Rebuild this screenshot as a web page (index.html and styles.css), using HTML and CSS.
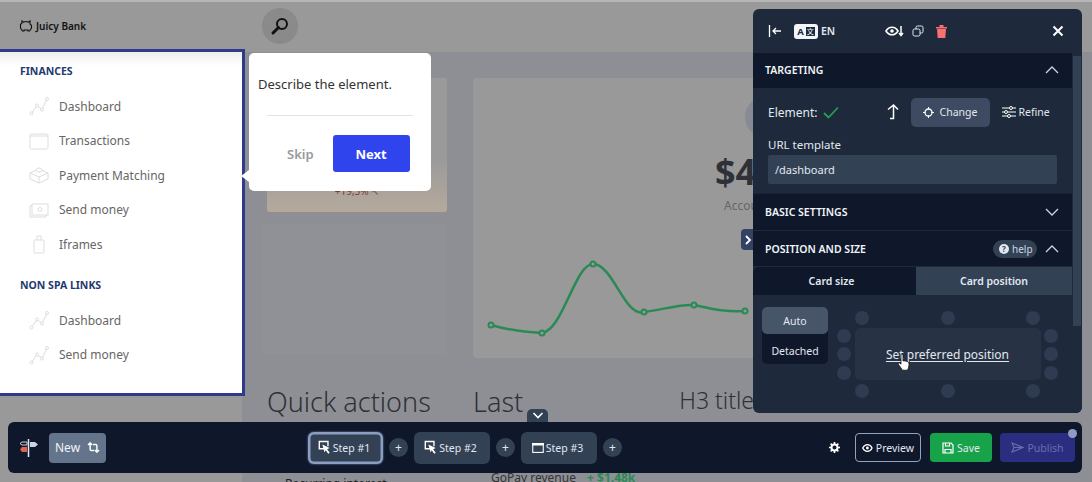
FILE: index.html
```html
<!DOCTYPE html>
<html lang="en">
<head>
<meta charset="utf-8">
<title>Juicy Bank</title>
<link rel="stylesheet" href="styles.css">
</head>
<body>
<div class="stage">
  <header class="topbar">
    <div class="logo">
      <svg width="14" height="14" viewBox="0 0 14 14" class="logo-icon"><path d="M3 2l1.500 1.200C6 2.400 8 2.400 9.500 3.200L11 2v3l1.500 1.500V9L10.500 12H9V11H5v1H3.500L1.500 9V5.500L3 4z" fill="none" stroke="#111" stroke-width="1.100"/></svg>
      <span>Juicy Bank</span>
    </div>
    <div class="search">
      <svg width="20" height="20" viewBox="0 0 20 20"><circle cx="12" cy="8" r="5" fill="none" stroke="#111" stroke-width="2"/><path d="M8.500 11.500L3 17" stroke="#111" stroke-width="3" stroke-linecap="round"/></svg>
    </div>
  </header>

  <div class="main">
    <nav class="sidebar">
      <h4 class="nav-title">FINANCES</h4>
      <a class="nav-item"><svg class="nav-icon" viewBox="0 0 20 20"><use href="#graph"/></svg>Dashboard</a>
      <a class="nav-item"><svg class="nav-icon" viewBox="0 0 20 20"><rect x="1" y="3" width="18" height="15" rx="1.500" fill="none" stroke="#ddd"/><path d="M1 5h18" stroke="#ddd"/></svg>Transactions</a>
      <a class="nav-item"><svg class="nav-icon" viewBox="0 0 20 20"><path d="M1 8l9-4 9 4v6l-9 4-9-4zM1 8l9 4 9-4M10 12v6" fill="none" stroke="#ddd"/><ellipse cx="10" cy="5" rx="3" ry="2" fill="#fff" stroke="#ddd"/></svg>Payment Matching</a>
      <a class="nav-item"><svg class="nav-icon" viewBox="0 0 20 20"><rect x="3" y="4" width="16" height="11" fill="none" stroke="#ddd"/><path d="M3 6H1v11h16v-2" fill="none" stroke="#ddd"/><circle cx="11" cy="9.500" r="2" fill="none" stroke="#ddd"/></svg>Send money</a>
      <a class="nav-item"><svg class="nav-icon" viewBox="0 0 20 20"><rect x="5" y="6" width="10" height="13" rx="1" fill="none" stroke="#ddd"/><path d="M8 6V2h4v4" fill="none" stroke="#ddd"/></svg>Iframes</a>
      <h4 class="nav-title nav-title-second">NON SPA LINKS</h4>
      <a class="nav-item"><svg class="nav-icon" viewBox="0 0 20 20"><use href="#graph"/></svg>Dashboard</a>
      <a class="nav-item"><svg class="nav-icon" viewBox="0 0 20 20"><use href="#graph"/></svg>Send money</a>
    </nav>

    <section class="content">
      <div class="col-left">
        <div class="peach-card"><span class="peach-text">+19,5% ↖</span></div>
        <div class="ghost-card"></div>
        <h2 class="big-heading">Quick actions</h2>
        <p class="recent">Recurring interest</p>
      </div>
      <div class="col-mid">
        <div class="chart-card">
          <div class="avatar"></div>
          <div class="amount">$4</div>
          <div class="account">Account</div>
          <svg class="spark" width="287" height="280" viewBox="0 0 287 280">
            <path d="M18 247C35 252 50 254 69 255C90 252 102 186 120 186C140 186 152 240 171 234C190 232 205 226 221 227C240 231 250 234 272 233" fill="none" stroke="#2a8a55" stroke-width="2.500"/>
            <g fill="#999" stroke="#2a8a55" stroke-width="2"><circle cx="18" cy="247" r="2.500"/><circle cx="69" cy="255" r="2.500"/><circle cx="120" cy="186" r="2.500"/><circle cx="171" cy="234" r="2.500"/><circle cx="221" cy="227" r="2.500"/><circle cx="272" cy="233" r="2.500"/></g>
          </svg>
        </div>
        <div class="heading-row">
          <h2 class="big-heading">Last</h2>
          <h3 class="h3-title">H3 title</h3>
        </div>
        <p class="revenue">GoPay revenue <b>+ $1.48k</b></p>
      </div>
    </section>
  </div>

  <aside class="popover">
    <span class="popover-arrow"></span>
    <p class="popover-text">Describe the element.</p>
    <hr class="popover-rule">
    <div class="popover-actions">
      <span class="skip">Skip</span>
      <button class="next">Next</button>
    </div>
  </aside>

  <span class="side-toggle"><svg width="8" height="12" viewBox="0 0 8 12"><path d="M2 2l4 4-4 4" fill="none" stroke="#fff" stroke-width="1.800"/></svg></span>

  <aside class="panel">
    <div class="panel-head">
      <svg class="ph-back" width="14" height="14" viewBox="0 0 14 14"><path d="M1.500 1v12M13 7H5M8 4L5 7l3 3" fill="none" stroke="#fff" stroke-width="1.300"/></svg>
      <span class="lang-badge"><b>A</b><i>文</i></span>
      <span class="lang">EN</span>
      <svg class="ph-eye" width="19" height="12" viewBox="0 0 19 12"><path d="M1 6c3-5 9-5 12 0-3 5-9 5-12 0z" fill="none" stroke="#fff" stroke-width="1.600"/><circle cx="7" cy="6" r="1.800" fill="#fff"/><path d="M16 1v9M14 8l2 2.500L18 8" fill="none" stroke="#fff" stroke-width="1.500"/></svg>
      <svg class="ph-copy" width="12" height="12" viewBox="0 0 12 12"><rect x="4" y="1" width="7" height="7" rx="1.500" fill="none" stroke="#e2e8f0"/><rect x="1" y="4" width="7" height="7" rx="1.500" fill="#1e293b" stroke="#e2e8f0"/></svg>
      <svg class="ph-trash" width="11" height="13" viewBox="0 0 11 13"><path d="M0 2h11v1.500H0zM3.500 0h4v2h-4zM1 4h9l-.7 9H1.700z" fill="#f87171"/></svg>
      <svg class="ph-close" width="12" height="12" viewBox="0 0 12 12"><path d="M1.500 1.500l9 9M10.500 1.500l-9 9" stroke="#fff" stroke-width="2"/></svg>
    </div>
    <div class="panel-body">
      <div class="panel-scroll">
        <div class="section-head section-target">
          <span>TARGETING</span>
          <svg class="chev" width="14" height="8" viewBox="0 0 14 8"><path d="M1 7l6-6 6 6" fill="none" stroke="#cbd5e1" stroke-width="1.300"/></svg>
        </div>
        <div class="targeting">
          <div class="element-row">
            <span class="element-label">Element:</span>
            <svg class="check" width="16" height="13" viewBox="0 0 16 13"><path d="M1 7l4.500 4.500L15 1.500" fill="none" stroke="#22a04f" stroke-width="1.800"/></svg>
            <svg class="up" width="12" height="16" viewBox="0 0 12 16"><path d="M1 5.500L6.500 1 11 5.500M6.500 1v13.500H3" fill="none" stroke="#fff" stroke-width="1.500"/></svg>
            <button class="change"><svg width="11" height="11" viewBox="0 0 11 11"><circle cx="5.500" cy="5.500" r="3.500" fill="none" stroke="#fff" stroke-width="1.300"/><path d="M5.500 0v2.500M5.500 8.500V11M0 5.500h2.500M8.500 5.500H11" stroke="#fff"/></svg>Change</button>
            <span class="refine"><svg width="14" height="12" viewBox="0 0 14 12"><path d="M0 2h14M0 6h14M0 10h14" stroke="#fff"/><circle cx="9" cy="2" r="1.500" fill="#1e293b" stroke="#fff"/><circle cx="4" cy="6" r="1.500" fill="#1e293b" stroke="#fff"/><circle cx="7" cy="10" r="1.500" fill="#1e293b" stroke="#fff"/></svg>Refine</span>
          </div>
          <label class="field-label">URL template</label>
          <div class="field">/dashboard</div>
        </div>
        <div class="section-head section-basic">
          <span>BASIC SETTINGS</span>
          <svg class="chev" width="14" height="8" viewBox="0 0 14 8"><path d="M1 1l6 6 6-6" fill="none" stroke="#cbd5e1" stroke-width="1.300"/></svg>
        </div>
        <div class="section-head section-pos">
          <span>POSITION AND SIZE</span>
          <span class="help"><i>?</i>help</span>
          <svg class="chev" width="14" height="8" viewBox="0 0 14 8"><path d="M1 7l6-6 6 6" fill="none" stroke="#cbd5e1" stroke-width="1.300"/></svg>
        </div>
        <div class="tabs">
          <span class="tab tab-size">Card size</span>
          <span class="tab tab-active">Card position</span>
        </div>
        <div class="position">
          <div class="modes">
            <span class="mode mode-active">Auto</span>
            <span class="mode">Detached</span>
          </div>
          <div class="pos-grid">
            <div class="dots dots-x"><i></i><i></i><i></i></div>
            <div class="pos-mid">
              <div class="dots dots-y"><i></i><i></i><i></i></div>
              <div class="pos-box"><a class="pos-link">Set preferred position</a></div>
              <div class="dots dots-y"><i></i><i></i><i></i></div>
            </div>
            <div class="dots dots-x"><i></i><i></i><i></i></div>
            <svg class="cursor" width="14" height="19" viewBox="0 0 14 19"><path d="M4 1.500c1-.8 2 0 2 1V8l1-.3 1 .3 1 .2 1.500.5c1 .4 1.500 1 1.500 2.500 0 2-.5 4-1.500 6H5.500L1.500 11.500c-.8-1 .3-2 1.500-1.200l1 .9z" fill="#fff" stroke="#111" stroke-width=".8"/></svg>
          </div>
        </div>
      </div>
      <div class="scrollbar"><span class="thumb"></span></div>
    </div>
  </aside>

  <span class="bar-toggle"><svg width="12" height="7" viewBox="0 0 12 7"><path d="M1.500 1l4.500 4.500L10.500 1" fill="none" stroke="#fff" stroke-width="1.600"/></svg></span>

  <footer class="bar">
    <div class="bar-left">
      <svg width="19" height="18" viewBox="0 0 19 18"><path d="M9.500 0v18" stroke="#e2e8f0" stroke-width="1.500"/><path d="M11 3h5l3 2.500L16 8h-5z" fill="#cbd5e1"/><path d="M8 3H3L1 4.500 3 6h5z" fill="none" stroke="#cbd5e1"/><path d="M8 8H3l-2 2.500L3 13h5z" fill="#e2624f"/></svg>
      <button class="new-btn">New
        <svg width="13" height="11" viewBox="0 0 15 13"><path d="M1 3.500L3.500 1 6 3.500M3.500 1.500V8.500q0 1.500 1.500 1.500H8M14 9.500L11.500 12 9 9.500M11.500 11.500V4.500q0-1.500-1.500-1.500H7" fill="none" stroke="#fff" stroke-width="1.700"/></svg>
      </button>
    </div>
    <div class="steps">
      <button class="step step-active"><svg class="step-icon" width="13" height="15" viewBox="0 0 15 17"><use href="#click"/></svg>Step #1</button>
      <span class="add">+</span>
      <button class="step"><svg class="step-icon" width="13" height="15" viewBox="0 0 15 17"><use href="#click"/></svg>Step #2</button>
      <span class="add">+</span>
      <button class="step"><svg class="step-icon" width="12" height="10" viewBox="0 0 14 12"><rect x=".7" y=".7" width="12.600" height="10.600" fill="none" stroke="#fff" stroke-width="1.300"/><path d="M0 0h14v3H0z" fill="#fff"/></svg>Step #3</button>
      <span class="add">+</span>
    </div>
    <div class="bar-right">
      <svg class="gear" width="11" height="11" viewBox="0 0 12 12"><circle cx="6" cy="6" r="3.300" fill="none" stroke="#fff" stroke-width="2.200"/><path d="M6 0v3M6 9v3M0 6h3M9 6h3M1.800 1.800l2 2M8.200 8.200l2 2M10.200 1.800l-2 2M3.800 8.200l-2 2" stroke="#fff" stroke-width="1.800"/></svg>
      <button class="act act-preview"><svg width="12" height="10" viewBox="0 0 12 10"><path d="M.8 5c2.500-5 8-5 10.400 0-2.400 5-7.900 5-10.400 0z" fill="none" stroke="#fff" stroke-width="1.400"/><circle cx="6" cy="5" r="1.600" fill="#fff"/></svg>Preview</button>
      <button class="act act-save"><svg width="12" height="12" viewBox="0 0 12 12"><path d="M1 1h8l2 2v8H1zM3.500 1v3h4V1M3 11V7.500h6V11" fill="none" stroke="#fff" stroke-width="1.200"/></svg>Save</button>
      <button class="act act-publish"><svg width="13" height="11" viewBox="0 0 13 11"><path d="M1 1l11 4.500L1 10l2-4.500zM3 5.500h9" fill="none" stroke="#6b6fa8" stroke-width="1.100"/></svg>Publish<span class="pub-dot"></span></button>
    </div>
  </footer>

  <svg class="defs" width="0" height="0">
    <defs>
      <g id="graph" fill="none" stroke="#ddd"><path d="M2.500 17.500L8 9.500l5 4L18 3"/><circle cx="2.500" cy="17.500" r="1.500" fill="#fff"/><circle cx="8" cy="9.500" r="1.500" fill="#fff"/><circle cx="13" cy="13.500" r="1.500" fill="#fff"/><circle cx="18" cy="3" r="1.500" fill="#fff"/></g>
      <g id="click"><path d="M10 10H1.500V1.500h10V7" fill="none" stroke="#fff" stroke-width="1.600"/><path d="M5 5l8.500 4-3 1.500 3 4-1.800 1.300-2.700-4L7.500 14z" fill="#fff"/></g>
    </defs>
  </svg>
</div>
</body>
</html>
```
FILE: styles.css
```css
* { box-sizing: border-box; }
html, body { margin: 0; padding: 0; }
body { font-family: "Noto Sans", "Open Sans", sans-serif; background: #8e8f94; }
button { font-family: inherit; border: 0; cursor: pointer; }
h2, h3, h4, p { margin: 0; font-weight: 400; }

.stage { position: relative; width: 1092px; height: 482px; overflow: hidden; background: #999; }
.defs { position: absolute; }

/* page behind the overlay */
.topbar { height: 52px; background: #999; border-top: 2px solid #b5b5b5; display: flex; align-items: center; padding-left: 19px; }
.logo { display: flex; align-items: center; gap: 3px; width: 243px; font: 600 10px "Noto Sans", sans-serif; color: #111; margin-top: -2px; }
.search { width: 36px; height: 36px; border-radius: 50%; background: #8a8a8a; display: flex; align-items: center; justify-content: center; margin-top: -2px; }

.main { display: flex; height: 430px; }
.sidebar { position: relative; z-index: 2; flex: none; width: 245px; height: 347px; margin-top: -3px; background: linear-gradient(#eeeeee, #fff 14px); border: 3px solid #2e3a8c; border-left: 0; padding: 11px 0 0 20px; }
.nav-title { font-size: 10.500px; font-weight: 700; color: #1e3a70; height: 16px; line-height: 16px; margin-bottom: 10px; }
.nav-title-second { margin: 15px 0 10.500px; }
.nav-item { display: flex; align-items: center; gap: 10px; height: 34.500px; padding-left: 9px; font-size: 12px; color: #666; }
.nav-icon { width: 20px; height: 20px; flex: none; }

.content { flex: 1; display: flex; gap: 26px; background: #8e8f94; padding: 26px 0 0 25px; margin-left: -3px; }
.col-left { width: 180px; flex: none; }
.col-mid { width: 400px; flex: none; }
.peach-card { height: 134px; background: linear-gradient(#9a9a9a 60%, #b5a99c); border-radius: 3px; display: flex; align-items: flex-end; justify-content: center; padding-bottom: 14px; }
.peach-text { font-size: 10px; color: #7a3b2a; }
.ghost-card { height: 130px; margin: 12px 0 30px -5px; background: #909196; border-radius: 3px; }
.big-heading { font-size: 27px; font-weight: 300; line-height: 36px; color: #2e3138; }
.recent { margin-top: 57px; padding-left: 18px; font-size: 12px; color: #222; line-height: 14px; }

.chart-card { position: relative; width: 400px; height: 280px; background: #999; border-radius: 3px; margin-bottom: 26px; }
.avatar { position: absolute; left: 272px; top: 18px; width: 42px; height: 42px; border-radius: 50%; background: #868b94; }
.amount { position: absolute; left: 242px; top: 70px; font-size: 36px; line-height: 48px; font-weight: 700; color: #2e3138; }
.account { position: absolute; left: 251px; top: 119px; font-size: 12px; color: #666; }
.spark { position: absolute; left: 0; top: 0; }
.heading-row { display: flex; gap: 204px; height: 36px; width: 280px; white-space: nowrap; }
.h3-title { font-size: 23px; font-weight: 300; line-height: 32px; color: #2e3138; margin-left: -48px; }
.revenue { margin-top: 51px; padding-left: 18px; font-size: 12px; color: #333; line-height: 14px; }
.revenue b { margin-left: 8px; color: #2a8a55; font-weight: 700; }

/* tour popover */
.popover { position: absolute; z-index: 3; left: 249px; top: 53px; width: 182px; height: 138px; background: #fff; border-radius: 5px; padding: 22px 0 0 9px; }
.popover-arrow { position: absolute; left: -8px; top: 117px; width: 0; height: 0; border: 6px solid transparent; border-right: 8px solid #fff; border-left: 0; }
.popover-text { font-size: 13px; line-height: 18px; color: #333; }
.popover-rule { border: 0; border-top: 1px solid #e2e2e2; margin: 22px 0 0 9px; width: 146px; }
.popover-actions { display: flex; align-items: center; margin-top: 19px; padding-left: 29px; gap: 19px; }
.skip { font-size: 13px; font-weight: 600; color: #999; }
.next { width: 77px; height: 37px; border-radius: 3px; background: #3044ee; color: #fff; font-size: 13px; font-weight: 700; }

.side-toggle { position: absolute; z-index: 3; left: 741px; top: 229px; width: 14px; height: 21px; background: #334163; border-radius: 4px 0 0 4px; display: flex; align-items: center; justify-content: center; }

/* editor panel */
.panel { position: absolute; z-index: 4; left: 753px; top: 9px; width: 329px; height: 404px; background: #1e293b; border-radius: 6px; color: #e2e8f0; display: flex; flex-direction: column; overflow: hidden; }
.panel-head { height: 44px; flex: none; display: flex; align-items: center; padding-left: 15px; font-size: 11px; }
.ph-back { margin-right: 12px; }
.lang-badge { display: flex; align-items: center; justify-content: center; gap: 2px; width: 24px; height: 15px; background: #f1f5f9; border-radius: 3px; color: #1e293b; font-size: 9.500px; line-height: 15px; }
.lang-badge b { font-weight: 700; }
.lang-badge i { font-style: normal; font-size: 7px; font-family: "Noto Sans CJK SC", sans-serif; background: #1e293b; color: #fff; line-height: 9px; width: 9px; text-align: center; }
.lang { margin-left: 3px; font-weight: 600; font-size: 10.500px; }
.ph-eye { margin-left: 50px; }
.ph-copy { margin-left: 8px; }
.ph-trash { margin-left: 12px; }
.ph-close { margin-left: 105px; }

.panel-body { flex: 1; display: flex; min-height: 0; }
.panel-scroll { width: 319px; flex: none; }
.scrollbar { flex: 1; background: #1e293b; padding: 3px 1px; }
.thumb { display: block; height: 270px; background: #334155; }

.section-head { display: flex; align-items: center; height: 36px; padding: 0 13px 0 12px; background: #0f172a; font-size: 10.500px; font-weight: 600; color: #f1f5f9; }
.section-head > span:first-child { margin-right: auto; }
.section-target { height: 35px; padding-bottom: 1px; }
.chev { flex: none; }
.targeting { height: 105px; padding: 9px 15px 0 15px; }
.element-row { display: flex; align-items: center; height: 30px; font-size: 12px; }
.element-label { color: #e2e8f0; }
.check { margin-left: 5px; }
.up { margin-left: 48px; }
.change { margin-left: 12px; width: 79px; height: 29px; border-radius: 5px; background: #3d4a61; color: #e2e8f0; font-size: 10.500px; display: flex; align-items: center; justify-content: center; gap: 6px; }
.refine { margin-left: 12px; display: flex; align-items: center; gap: 3px; font-size: 10.500px; }
.field-label { display: block; margin-top: 10px; font-size: 11.500px; line-height: 16px; }
.field { height: 29px; margin: 2px 0 0 0; width: 289px; background: #334155; border-radius: 2px; padding-left: 7px; font-size: 11px; line-height: 29px; }
.section-basic { height: 37px; border-top: 1px solid #1a2438; }
.section-pos { margin-top: 1px; height: 35px; }
.help { display: flex; align-items: center; gap: 3px; height: 18px; width: 44px; border-radius: 9px; background: #334155; padding-left: 6px; font-size: 10px; font-weight: 400; color: #cbd5e1; margin-right: 8px; }
.help i { width: 10px; height: 10px; border-radius: 50%; background: #e2e8f0; color: #334155; font-style: normal; font-size: 8px; font-weight: 700; line-height: 10px; text-align: center; }
.tabs { display: flex; height: 28px; margin-top: 1px; background: #0f172a; border-radius: 6px 0 0 0; }
.tab { flex: 1; display: flex; align-items: center; justify-content: center; font-size: 10.500px; font-weight: 600; color: #e2e8f0; }
.tab-size { padding-right: 6px; }
.tab-active { background: #334155; flex: 0 0 156px; }

.position { display: flex; padding: 12px 0 0 9px; gap: 9px; }
.modes { width: 66px; height: 57px; background: #0f172a; border-radius: 5px; flex: none; display: flex; flex-direction: column; }
.mode { height: 27px; display: flex; align-items: center; justify-content: center; font-size: 10.500px; color: #e2e8f0; }
.mode-active { background: #475569; border-radius: 5px; }
.mode:last-child { height: 30px; padding-top: 3px; }
.pos-grid { position: relative; width: 224px; margin-top: 4px; margin-left: -1px; }
.dots i { display: block; width: 14px; height: 14px; border-radius: 50%; background: #2f3b50; }
.dots-x { display: flex; justify-content: space-between; width: 185px; margin-left: 19px; }
.dots-y { display: flex; flex-direction: column; gap: 4.500px; }
.pos-mid { display: flex; align-items: center; justify-content: space-between; margin: 3px 0 4px 1px; padding: 0 2px 0 0; }
.pos-box { width: 186px; height: 52px; background: #273244; border-radius: 5px; display: flex; align-items: center; justify-content: center; }
.pos-link { font-size: 12px; color: #e2e8f0; text-decoration: underline; text-underline-offset: 2px; }
.cursor { position: absolute; left: 61px; top: 42px; }

/* bottom toolbar */
.bar-toggle { position: absolute; z-index: 4; left: 527px; top: 409px; width: 21px; height: 13px; background: #334155; border-radius: 5px 5px 0 0; display: flex; align-items: center; justify-content: center; }
.bar { position: absolute; z-index: 4; left: 8px; top: 422px; width: 1074px; height: 51px; background: #0f172a; border-radius: 6px; display: flex; align-items: center; justify-content: space-between; color: #fff; padding-left: 11px; }
.bar-left { display: flex; align-items: center; gap: 11px; width: 282px; }
.new-btn { display: flex; align-items: center; gap: 7px; width: 57px; height: 30px; border-radius: 4px; background: #64748b; color: #f1f5f9; font-size: 12px; padding: 0 0 0 6px; }
.steps { display: flex; align-items: center; gap: 6px; }
.step { display: flex; align-items: center; justify-content: center; gap: 2px; width: 76px; height: 32px; padding: 0 3px 0 0; background: #334155; border-radius: 6px; color: #e2e8f0; font-size: 10.500px; }
.step-active { width: 75px; box-shadow: inset 0 0 0 2.500px #8b9dc0, 0 0 2px #8b9dc0; }
.add { width: 19px; height: 19px; border-radius: 50%; background: #334155; display: flex; align-items: center; justify-content: center; font-size: 12px; line-height: 1; color: #e2e8f0; }
.bar-right { display: flex; align-items: center; width: 453px; justify-content: flex-end; padding-right: 7px; }
.gear { margin-right: 15px; }
.act { position: relative; display: flex; align-items: center; justify-content: center; gap: 3px; height: 29px; border-radius: 4px; font-size: 10.500px; }
.act-preview { width: 66px; background: transparent; border: 1px solid #94a3b8; color: #e2e8f0; margin-right: 9px; }
.act-save { width: 62px; background: #16a34a; color: #e2e8f0; margin-right: 8px; }
.act-publish { width: 75px; background: #2b2d80; color: #6b6fa8; }
.pub-dot { position: absolute; right: -2px; top: -4px; width: 9px; height: 9px; border-radius: 50%; background: #8e9cc5; }
```
